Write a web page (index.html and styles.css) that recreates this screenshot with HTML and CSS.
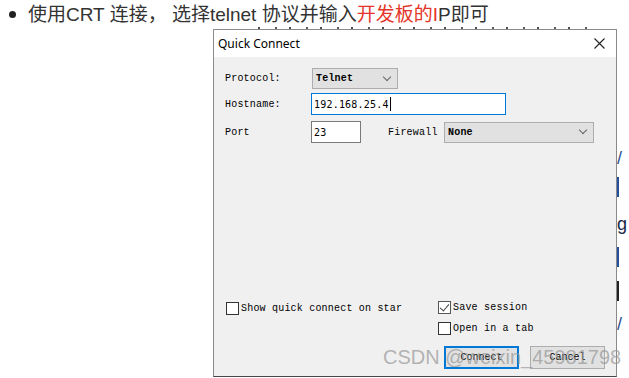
FILE: index.html
```html
<!DOCTYPE html>
<html lang="zh-CN">
<head>
    <meta charset="UTF-8">
    <title>Quick Connect</title>
    <link rel="stylesheet" href="styles.css">
</head>
<body>
    <p class="intro"><span class="dot"></span>使用CRT 连接， 选择telnet 协议并输入<span class="red">开发板的I</span>P即可</p>
    <div class="stage">
        <div class="dialog">
            <div class="titlebar">
                <span class="title">Quick Connect</span>
                <svg class="close" width="11" height="11" viewBox="0 0 11 11">
                    <path d="M0.5 0.5 L10.5 10.5 M10.5 0.5 L0.5 10.5" stroke="#222" stroke-width="1.1" fill="none"/>
                </svg>
            </div>
            <div class="body">
                <div class="row first">
                    <span class="label">Protocol:</span>
                    <div class="select proto">Telnet<span class="chev"></span></div>
                </div>
                <div class="row host">
                    <span class="label">Hostname:</span>
                    <div class="input wide focus"><span class="num">192.168.25.4</span><span class="caret"></span></div>
                </div>
                <div class="row port">
                    <span class="label">Port</span>
                    <div class="input small"><span class="num">23</span></div>
                    <span class="label fw">Firewall</span>
                    <div class="select firewall">None<span class="chev"></span></div>
                </div>

                <div class="bottom">
                    <div class="col-left">
                        <label class="check"><span class="box"></span>Show quick connect on star</label>
                    </div>
                    <div class="col-right">
                        <label class="check"><span class="box on"></span>Save session</label>
                        <label class="check tab"><span class="box"></span>Open in a tab</label>
                        <div class="buttons">
                            <button class="btn primary">Connect</button>
                            <button class="btn">Cancel</button>
                        </div>
                    </div>
                </div>
            </div>
        </div>
        <div class="edge">
            <span class="frag slash">/</span>
            <span class="frag bar"></span>
            <span class="frag g">g</span>
            <span class="frag br blue"></span>
            <span class="frag br"></span>
            <span class="frag slash low">/</span>
        </div>
        <div class="watermark">CSDN @weixin_45981798</div>
    </div>
</body>
</html>
```

FILE: styles.css
```css
body {
    margin: 0;
    background: #fff;
    font-family: "Liberation Sans", "Noto Sans CJK SC", sans-serif;
    overflow: hidden;
}
.intro {
    margin: 0;
    height: 29px;
    line-height: 29px;
    font-size: 19px;
    color: #333;
    padding-left: 9px;
    white-space: nowrap;
}
.dot {
    display: inline-block;
    width: 7px;
    height: 7px;
    border-radius: 50%;
    background: #222;
    margin-right: 12px;
    vertical-align: 3px;
}
.red {
    color: #e5342a;
}
.stage {
    position: relative;
    display: flex;
    padding-left: 213px;
}
.stage::before {
    content: "";
    position: absolute;
    left: 258px;
    top: -2px;
    width: 340px;
    height: 2px;
    background: repeating-linear-gradient(90deg, #222 0 2px, transparent 2px 17px, #333 17px 19px, transparent 19px 31px);
    opacity: 0.8;
}
.dialog {
    width: 402px;
    height: 346px;
    border: 1px solid #8a8a8a;
    border-bottom-color: #444;
    display: flex;
    flex-direction: column;
    background: #f0f0f0;
}
.titlebar {
    height: 27px;
    background: #fff;
    display: flex;
    align-items: center;
    justify-content: space-between;
    padding: 0 11px 0 4px;
}
.title {
    font-family: "Noto Sans", sans-serif;
    font-size: 12px;
    color: #000;
}
.body {
    flex: 1;
    display: flex;
    flex-direction: column;
    padding: 11px 11px 7px 11px;
    font-family: "Liberation Mono", monospace;
    font-size: 10px;
    letter-spacing: 0.2px;
    color: #000;
}
.row {
    display: flex;
    align-items: center;
}
.row.host {
    margin-top: 4px;
}
.row.port {
    margin-top: 6px;
}
.label {
    width: 87px;
    flex: none;
}
.label.fw {
    width: 56px;
    margin-left: 27px;
}
.select {
    box-sizing: border-box;
    height: 21px;
    background: #e1e1e1;
    border: 1px solid #adadad;
    display: flex;
    align-items: center;
    justify-content: space-between;
    padding: 0 7px 0 3px;
    font-weight: bold;
}
.select.proto {
    width: 86px;
}
.select.firewall {
    width: 150px;
}
.chev {
    width: 5px;
    height: 5px;
    border-right: 1px solid #666;
    border-bottom: 1px solid #666;
    transform: rotate(45deg);
    margin-top: -4px;
}
.input {
    box-sizing: border-box;
    height: 22px;
    background: #fff;
    border: 1px solid #7a7a7a;
    display: flex;
    align-items: center;
    padding-left: 2px;
}
.input.wide {
    width: 195px;
    margin-left: -1px;
}
.input.small {
    width: 50px;
    margin-left: -1px;
}
.input.focus {
    border-color: #0078d7;
}
.num {
    font-family: "DejaVu Sans Mono", monospace;
    font-size: 10px;
    letter-spacing: 0.2px;
}
.caret {
    width: 1px;
    height: 14px;
    background: #000;
    margin-left: 1px;
}
.bottom {
    margin-top: auto;
    display: flex;
    padding-left: 1px;
}
.col-left {
    width: 213px;
    padding-top: 1px;
}
.col-right {
    display: flex;
    flex-direction: column;
}
.check {
    display: flex;
    align-items: center;
    height: 13px;
    white-space: nowrap;
}
.check.tab {
    margin-top: 8px;
}
.box {
    box-sizing: border-box;
    width: 13px;
    height: 13px;
    border: 1px solid #333;
    background: #fff;
    margin-right: 2px;
    position: relative;
}
.box.on {
    border-color: #555;
}
.box.on::after {
    content: "";
    position: absolute;
    left: 3px;
    top: 0;
    width: 4px;
    height: 8px;
    border-right: 1px solid #444;
    border-bottom: 1px solid #444;
    transform: rotate(40deg);
}
.buttons {
    display: flex;
    gap: 11px;
    margin-top: 11px;
    margin-left: 6px;
}
.btn {
    box-sizing: border-box;
    width: 75px;
    height: 23px;
    background: #e1e1e1;
    border: 1px solid #adadad;
    font-family: "Liberation Mono", monospace;
    font-size: 10px;
    color: #000;
    padding: 0;
}
.btn.primary {
    border: 2px solid #0078d7;
}
.edge {
    width: 12px;
    height: 349px;
    display: flex;
    flex-direction: column;
    overflow: hidden;
    font-size: 18px;
    color: #1a2a4a;
}
.frag {
    display: block;
    line-height: 1;
}
.slash {
    margin-top: 120px;
    color: #2d4f8e;
}
.bar {
    width: 2px;
    height: 20px;
    background: #2450a0;
    margin-top: 10px;
}
.g {
    margin-top: 18px;
}
.br {
    width: 6px;
    height: 20px;
    border-left: 2px solid #222;
    margin-top: 14px;
}
.br.blue {
    border-color: #2450a0;
}
.slash.low {
    margin-top: 14px;
}
.watermark {
    position: absolute;
    left: 383px;
    top: 317px;
    font-family: "Liberation Sans", sans-serif;
    font-size: 20px;
    color: rgba(150, 150, 150, 0.7);
    white-space: nowrap;
}
```
